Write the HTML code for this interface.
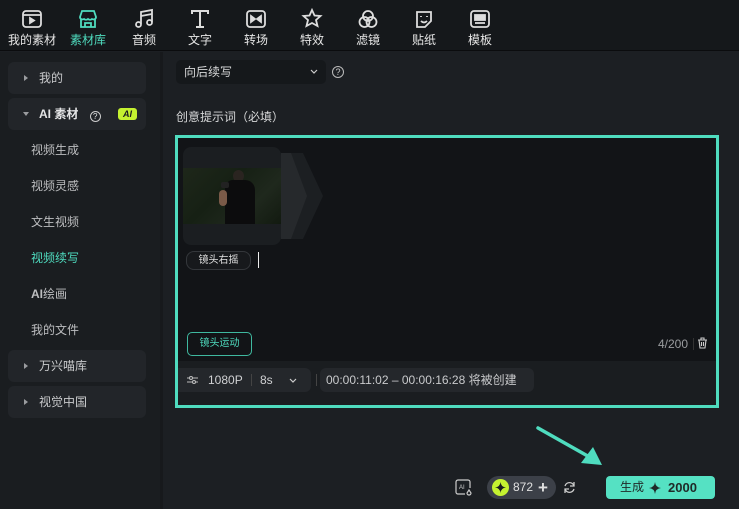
<!DOCTYPE html>
<html><head><meta charset="utf-8"><style>
*{margin:0;padding:0;box-sizing:border-box}
body{width:739px;height:509px;background:#1c1f23;font-family:"Liberation Sans","Noto Sans CJK SC",sans-serif;color:#d8d9db;position:relative;overflow:hidden;font-size:12px}
.top{position:absolute;left:0;top:0;width:739px;height:51px;background:#15181b;border-bottom:1px solid #0b0c0e}
.tab{position:absolute;top:0;width:56px;text-align:center;font-size:12px;color:#e6e6e6}
.tab svg{display:block;margin:8px auto 1px;width:22px;height:22px}
.side{position:absolute;left:0;top:52px;width:160px;height:457px;background:#1a1d20}
.sep{position:absolute;left:160px;top:52px;width:3px;height:457px;background:#17191c}
.box{position:absolute;left:8px;width:138px;height:32px;background:#222529;border-radius:6px;font-size:12px;color:#c9cacc;line-height:32px;padding-left:31px}
.box .tri{position:absolute;left:16px;top:13px;width:0;height:0;border-left:4px solid #9a9c9f;border-top:3px solid transparent;border-bottom:3px solid transparent}
.sub{position:absolute;left:31px;font-size:12px;color:#bdbec0}
.gbox{position:absolute;left:175px;top:135px;width:544px;height:273px;border:3px solid #4fdcbf;background:#121417}
</style></head><body>
<div class="top">
 <div class="tab" style="left:4px"><svg viewBox="0 0 22 22" fill="none" stroke="#ddd" stroke-width="1.8"><rect x="2" y="3" width="18" height="16" rx="3"/><path d="M2 7h18"/><path d="M9 10l4 2.5-4 2.5z" fill="#ddd"/></svg>我的素材</div>
 <div class="tab" style="left:60px;color:#4fdcbf"><svg viewBox="0 0 22 22" fill="none" stroke="#4fdcbf" stroke-width="1.8"><path d="M3 9l2-6h12l2 6c0 2-2 3-4 2-1 1-3 1-4 0-1 1-3 1-4 0-2 1-4 0-4-2z"/><path d="M4 11v8h14v-8"/><path d="M8 19v-4h6v4"/></svg>素材库</div>
 <div class="tab" style="left:116px"><svg viewBox="0 0 22 22" fill="none" stroke="#ddd" stroke-width="1.8"><path d="M8 16V4l11-2v12"/><circle cx="5.5" cy="16.5" r="2.5"/><circle cx="16.5" cy="14.5" r="2.5"/><path d="M8 8l11-2"/></svg>音频</div>
 <div class="tab" style="left:172px"><svg viewBox="0 0 22 22" fill="none" stroke="#ddd" stroke-width="2"><path d="M3 6V3h16v3M11 3v16M7 19h8"/></svg>文字</div>
 <div class="tab" style="left:228px"><svg viewBox="0 0 22 22" fill="none" stroke="#ddd" stroke-width="1.8"><rect x="2" y="3" width="18" height="16" rx="3"/><path d="M6 8l4 3-4 3zM16 8l-4 3 4 3z" fill="#ddd"/></svg>转场</div>
 <div class="tab" style="left:284px"><svg viewBox="0 0 22 22" fill="none" stroke="#ddd" stroke-width="1.8"><path d="M11 2l2.5 5.5 6 .5-4.5 4 1.5 6-5.5-3-5.5 3 1.5-6L2.5 8l6-.5z"/></svg>特效</div>
 <div class="tab" style="left:340px"><svg viewBox="0 0 22 22" fill="none" stroke="#ddd" stroke-width="1.8"><circle cx="11" cy="8" r="5"/><circle cx="7.5" cy="14" r="5"/><circle cx="14.5" cy="14" r="5"/></svg>滤镜</div>
 <div class="tab" style="left:396px"><svg viewBox="0 0 22 22" fill="none" stroke="#ddd" stroke-width="1.8"><path d="M4 4h14v9l-6 6H4z"/><path d="M8 13c2 2 4 2 6 0M8 8v1M14 8v1"/></svg>贴纸</div>
 <div class="tab" style="left:452px"><svg viewBox="0 0 22 22" fill="none" stroke="#ddd" stroke-width="1.8"><rect x="2" y="3" width="18" height="16" rx="3"/><rect x="6" y="7" width="10" height="5" fill="#ddd"/><path d="M6 15h10"/></svg>模板</div>
</div>
<div class="side"></div><div class="sep"></div>
<div class="box" style="top:62px"><span class="tri"></span>我的</div>
<div class="box" style="top:98px;font-weight:bold;color:#e4e5e6"><span class="tri" style="border-left:3px solid transparent;border-right:3px solid transparent;border-top:4px solid #9a9c9f;border-bottom:0;top:14px;left:15px"></span>AI 素材 <span style="display:inline-block;width:11px;height:11px;border:1px solid #ccc;border-radius:50%;font-size:8px;line-height:9px;text-align:center;vertical-align:-1px;margin-left:8px;font-weight:normal">?</span><span style="position:absolute;left:110px;top:10px;width:19px;height:12px;background:#c5f230;border-radius:3px;color:#1a1d20;font-size:9px;line-height:12px;text-align:center;font-style:italic">AI</span></div>
<div class="sub" style="top:141px">视频生成</div>
<div class="sub" style="top:177px">视频灵感</div>
<div class="sub" style="top:213px">文生视频</div>
<div class="sub" style="top:249px;color:#4fdcbf">视频续写</div>
<div class="sub" style="top:285px"><b>AI</b>绘画</div>
<div class="sub" style="top:321px">我的文件</div>
<div class="box" style="top:350px"><span class="tri"></span>万兴喵库</div>
<div class="box" style="top:386px"><span class="tri"></span>视觉中国</div>

<div style="position:absolute;left:176px;top:60px;width:150px;height:24px;background:#15181b;border-radius:5px;padding-left:8px;line-height:24px;font-size:12px;color:#d6d7d8">向后续写<svg style="position:absolute;right:8px;top:9px" width="8" height="5" viewBox="0 0 8 5"><path d="M1 1l3 3 3-3" stroke="#ccc" fill="none" stroke-width="1.2"/></svg></div>
<div style="position:absolute;left:332px;top:66px;width:12px;height:12px;border:1px solid #bbb;border-radius:50%;font-size:9px;line-height:10px;text-align:center;color:#ccc">?</div>
<div style="position:absolute;left:176px;top:108px;font-size:12px;color:#d6d7d8">创意提示词（必填）</div>

<div class="gbox">
 <div style="position:absolute;left:5px;top:9px;width:98px;height:98px;background:#1b1e21;border-radius:8px;overflow:hidden">
  <div style="position:absolute;left:0;top:21px;width:98px;height:56px;background:linear-gradient(135deg,#1e271a 0%,#162014 40%,#1f281d 70%,#121a10 100%)">
   <div style="position:absolute;left:50px;top:2px;width:11px;height:12px;border-radius:50%;background:#2a2420"></div>
   <div style="position:absolute;left:42px;top:12px;width:30px;height:44px;background:#0c0c0d;border-radius:8px 10px 0 0"></div>
   <div style="position:absolute;left:38px;top:14px;width:8px;height:6px;background:#222;border-radius:2px"></div>
   <div style="position:absolute;left:36px;top:22px;width:8px;height:16px;background:#7a5a48;border-radius:4px"></div>
  </div>
 </div>
 <svg style="position:absolute;left:103px;top:15px" width="46" height="86" viewBox="0 0 46 86"><path d="M0 0h22l20 43-20 43H0l18-43z" fill="#1c1f22"/><path d="M0 0h10l16 43-16 43H0z" fill="#26292c"/></svg>
 <div style="position:absolute;left:8px;top:113px;width:65px;height:19px;border:1px solid #34373b;border-radius:8px;font-size:10px;line-height:17px;text-align:center;color:#e0e0e0;background:#17191c">镜头右摇</div>
 <div style="position:absolute;left:80px;top:114px;width:1px;height:16px;background:#eee"></div>
 <div style="position:absolute;left:9px;top:194px;width:65px;height:24px;border:1.5px solid #3fb89f;border-radius:5px;font-size:10px;line-height:21px;text-align:center;color:#4fdcbf">镜头运动</div>
 <div style="position:absolute;right:28px;top:199px;font-size:12px;color:#9a9c9f">4/200</div>
 <div style="position:absolute;right:22px;top:200px;width:1px;height:12px;background:#333"></div>
 <svg style="position:absolute;right:8px;top:199px" width="11" height="12" viewBox="0 0 11 12" fill="none" stroke="#ccc" stroke-width="1.1"><path d="M1 3h9M4 3V1h3v2M2 3l1 8h5l1-8M4.5 5v4M6.5 5v4"/></svg>
 <div style="position:absolute;left:0;top:223px;width:538px;height:44px;background:#1a1d20"></div>
 <div style="position:absolute;left:0;top:230px;width:133px;height:24px;background:#24272b;border-radius:0 6px 6px 0;font-size:12px;line-height:24px;color:#d0d1d3">
  <svg style="position:absolute;left:9px;top:7px" width="11" height="10" viewBox="0 0 11 10" fill="none" stroke="#bbb" stroke-width="1.1"><path d="M0 3h11M0 7h11"/><circle cx="4" cy="3" r="1.5" fill="#24272b"/><circle cx="7" cy="7" r="1.5" fill="#24272b"/></svg>
  <span style="position:absolute;left:30px">1080P</span><span style="position:absolute;left:73px;top:6px;width:1px;height:12px;background:#444"></span><span style="position:absolute;left:82px">8s</span>
  <svg style="position:absolute;left:111px;top:10px" width="8" height="5" viewBox="0 0 8 5"><path d="M1 1l3 3 3-3" stroke="#ccc" fill="none" stroke-width="1.2"/></svg>
 </div>
 <div style="position:absolute;left:138px;top:236px;width:1px;height:12px;background:#444"></div>
 <div style="position:absolute;left:142px;top:230px;width:214px;height:24px;background:#24272b;border-radius:6px;font-size:12px;line-height:24px;color:#c9cacc;padding-left:6px">00:00:11:02 – 00:00:16:28 将被创建</div>
</div>

<svg style="position:absolute;left:535px;top:425px" width="70" height="42" viewBox="0 0 70 42"><path d="M3 3L58 34" stroke="#4fdcbf" stroke-width="3.5" stroke-linecap="round"/><path d="M67 40L46 38 58 22z" fill="#4fdcbf"/></svg>
<svg style="position:absolute;left:455px;top:479px" width="18" height="18" viewBox="0 0 18 18" fill="none" stroke="#ccc" stroke-width="1.2"><path d="M10 15H3a2 2 0 01-2-2V3a2 2 0 012-2h10a2 2 0 012 2v6"/><text x="4" y="10" font-size="6" fill="#ccc" stroke="none" font-family="Liberation Sans">AI</text><path d="M14 11l-2 3a2 2 0 004 0z"/></svg>
<div style="position:absolute;left:487px;top:476px;width:69px;height:23px;background:#3c4048;border-radius:12px;font-size:12px;line-height:23px;color:#e0e0e0">
 <span style="position:absolute;left:5px;top:3px;width:17px;height:17px;border-radius:50%;background:#c5f230"></span>
 <svg style="position:absolute;left:8px;top:6px" width="11" height="11" viewBox="0 0 11 11"><path d="M5.5 0Q6 5 11 5.5Q6 6 5.5 11Q5 6 0 5.5Q5 5 5.5 0z" fill="#1a1d20"/></svg>
 <span style="position:absolute;left:26px">872</span><span style="position:absolute;left:51px;font-size:17px;font-weight:bold">+</span>
</div>
<svg style="position:absolute;left:563px;top:481px" width="13" height="13" viewBox="0 0 13 13" fill="none" stroke="#ccc" stroke-width="1.3"><path d="M11 5A4.7 4.7 0 002 5M2 8a4.7 4.7 0 009 0"/><path d="M11 1v4H7M2 12V8h4"/></svg>
<div style="position:absolute;left:606px;top:476px;width:109px;height:23px;background:#55e1c3;border-radius:4px;font-size:12px;line-height:23px;color:#1f2a28">
 <span style="position:absolute;left:14px">生成</span>
 <svg style="position:absolute;left:43px;top:6px" width="12" height="12" viewBox="0 0 11 11"><path d="M5.5 0Q6 5 11 5.5Q6 6 5.5 11Q5 6 0 5.5Q5 5 5.5 0z" fill="#1f2a28"/></svg>
 <span style="position:absolute;left:62px;font-weight:bold;font-size:13px">2000</span>
</div>
</body></html>
